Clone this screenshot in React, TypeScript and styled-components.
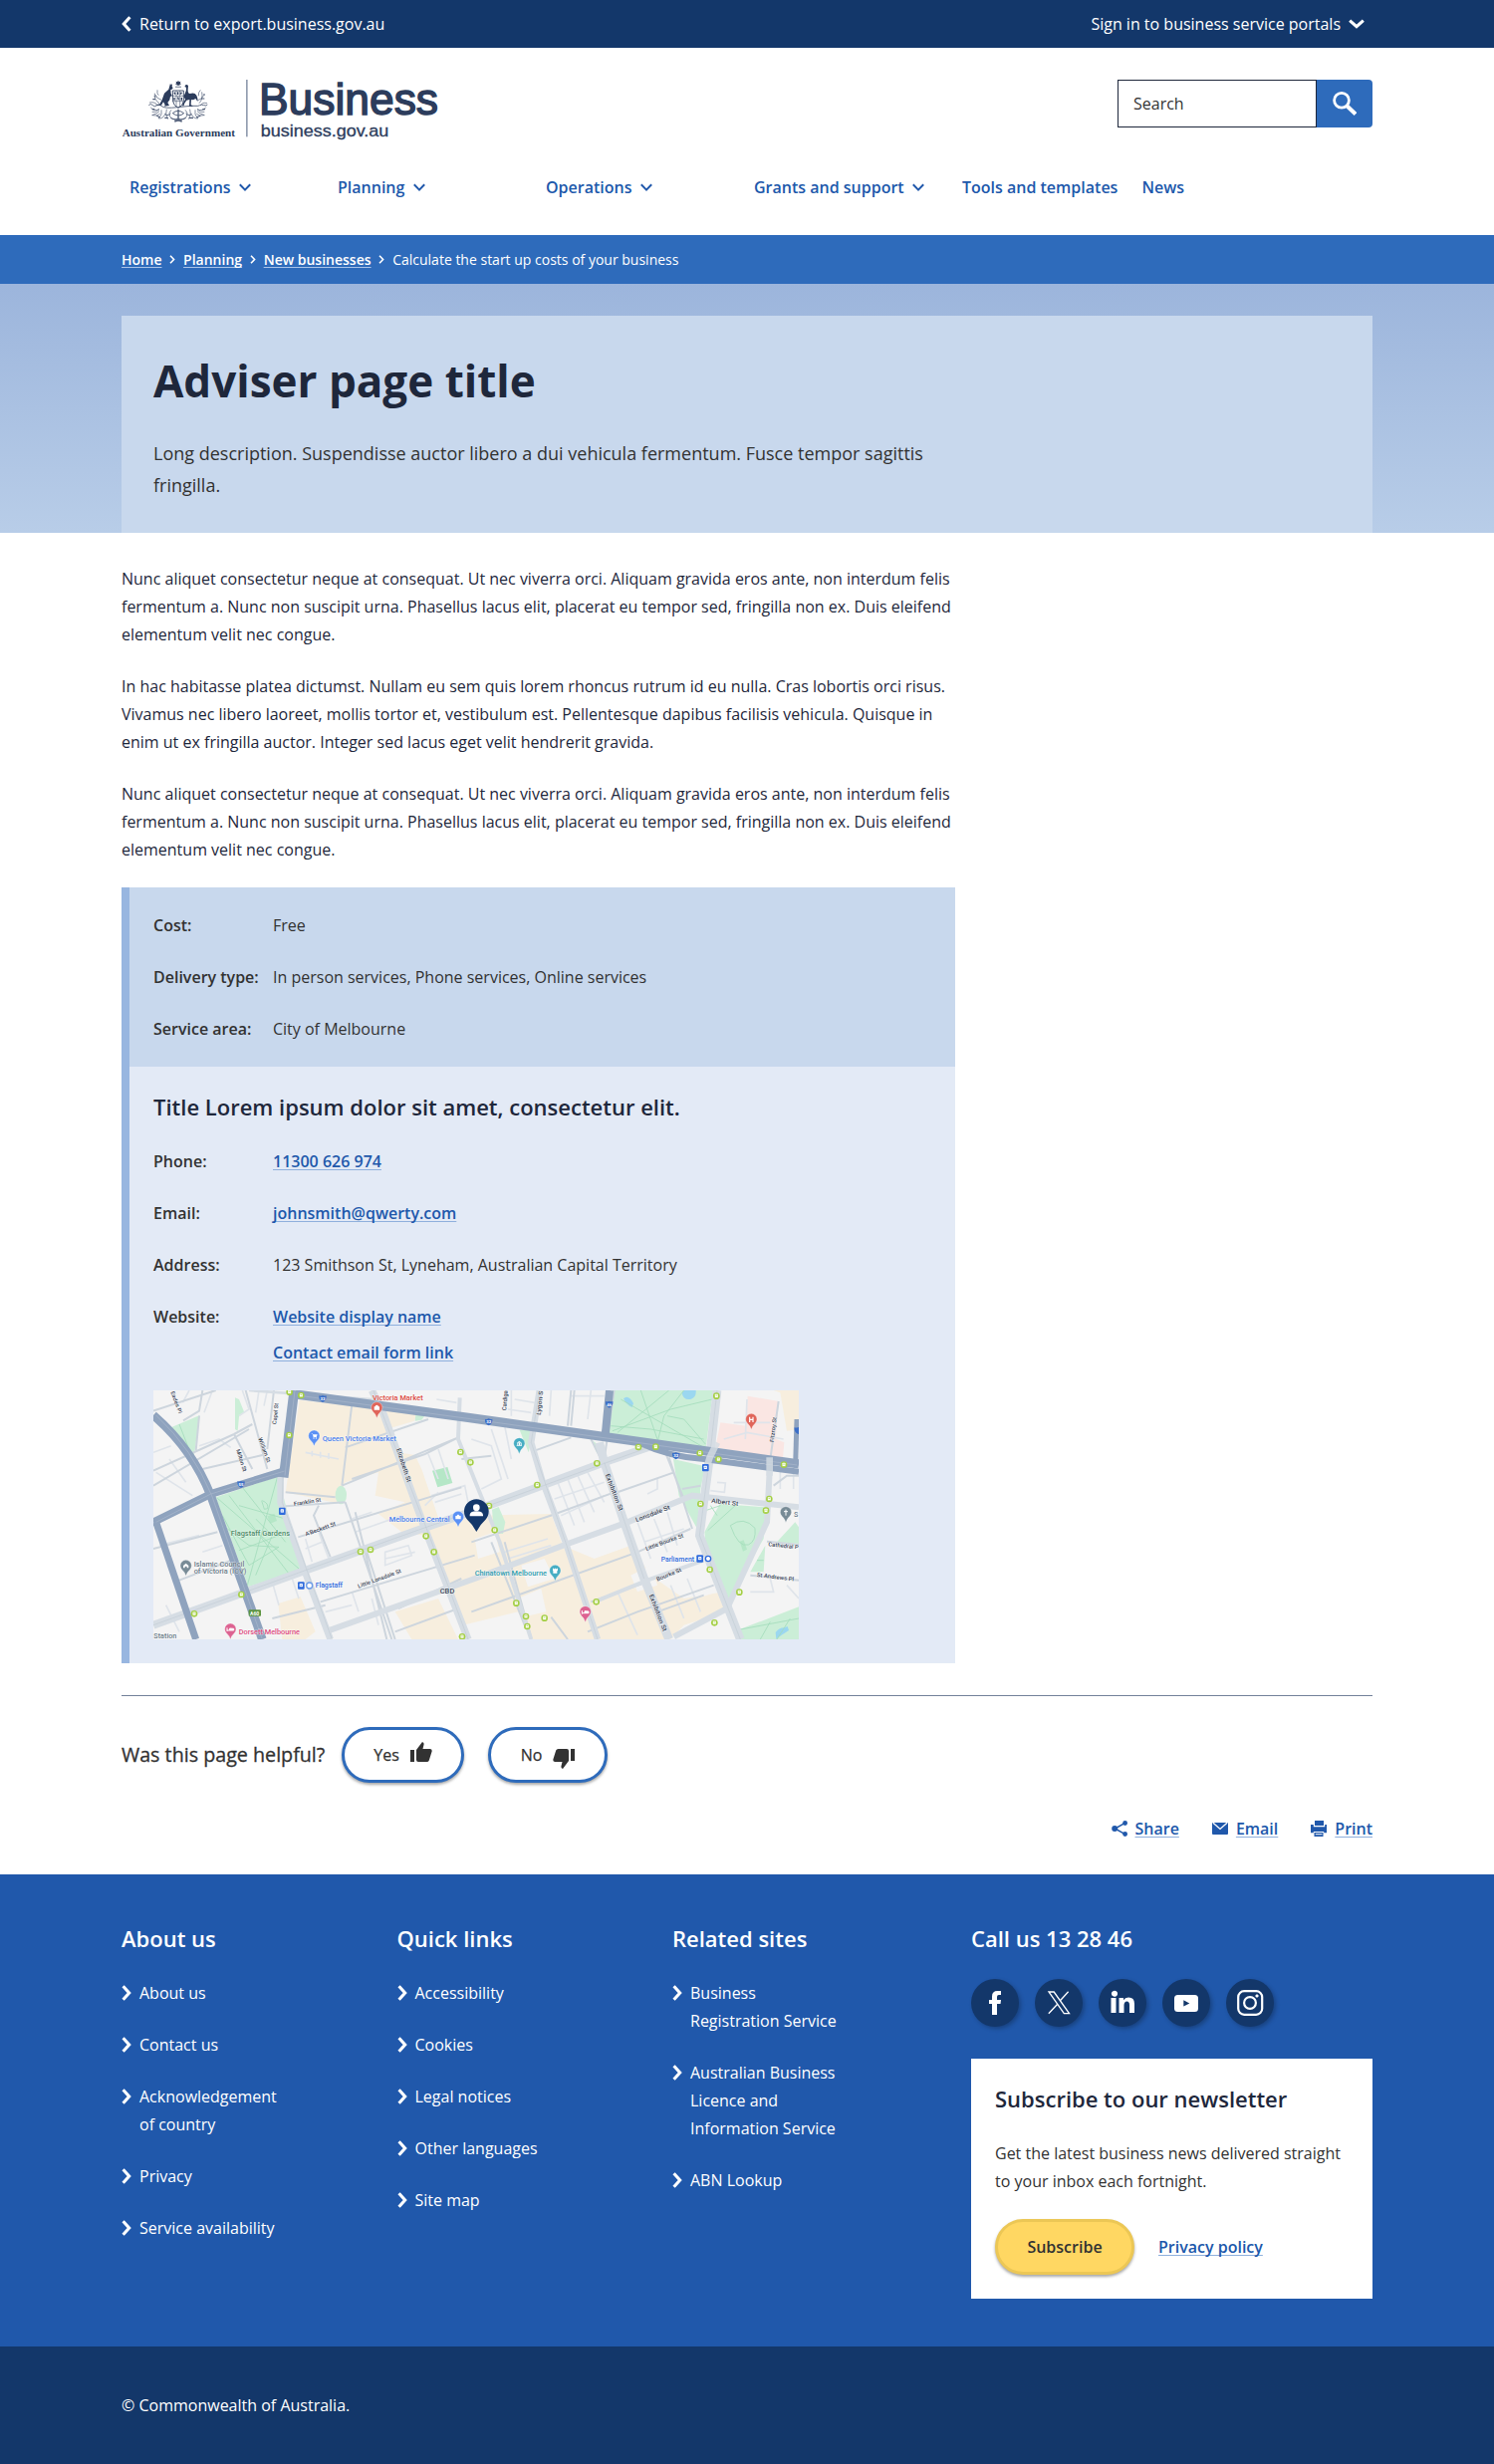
import React from "react";
import styled, { createGlobalStyle } from "styled-components";

const c = {
  navy: "#13376a",
  blue: "#2e6bbb",
  royal: "#2058ab",
  link: "#2058ab",
  ink: "#1e273b",
  text: "#323232",
  pale: "#c8d8ed",
  paler: "#e3eaf6",
  edge: "#98b6e0",
};

const GlobalStyle = createGlobalStyle`
  *, *::before, *::after { box-sizing: border-box; }
  body { margin: 0; background: #fff; color: ${c.text}; font: 400 16px/28px "Open Sans", "Noto Sans", sans-serif; }
  p, h1, h2, ul, dl, dd, dt { margin: 0; padding: 0; font-size: inherit; font-weight: inherit; }
  ul { list-style: none; }
  svg { display: block; flex: none; }
  a { color: inherit; text-decoration: none; }
`;

const Container = styled.div`
  width: 1256px;
  margin: 0 auto;
`;

const TopBar = styled.div`
  height: 48px;
  background: ${c.navy};
  color: #fff;
`;

const TopBarInner = styled(Container)`
  height: 48px;
  display: flex;
  align-items: center;
  justify-content: space-between;
`;

const IconLink = styled.a<{ $gap?: number; $end?: number }>`
  display: flex;
  align-items: center;
  gap: ${(p) => p.$gap ?? 8}px;
  margin-right: ${(p) => p.$end ?? 0}px;
`;

const Header = styled.header`
  height: 188px;
`;

const Masthead = styled(Container)`
  display: flex;
  justify-content: space-between;
  align-items: flex-start;
  padding-top: 32px;
  height: 120px;
`;

const LogoArt = styled.svg`
  overflow: visible;
`;

const SearchForm = styled.div`
  display: flex;
  width: 256px;
  height: 48px;
`;

const SearchField = styled.div`
  flex: 1;
  border: 1.5px solid ${c.ink};
  padding: 0 15px;
  line-height: 46px;
`;

const SearchButton = styled.button`
  width: 56px;
  border: 0;
  padding: 0;
  border-radius: 0 4px 4px 0;
  background: ${c.blue};
  display: flex;
  align-items: center;
  justify-content: center;
`;

const Nav = styled(Container)`
  display: flex;
  height: 40px;
  align-items: center;
`;

const NavItem = styled.a<{ $width?: number }>`
  display: flex;
  align-items: center;
  gap: 7.5px;
  width: ${(p) => (p.$width ? `${p.$width}px` : "auto")};
  padding: 0 8px;
  margin-right: ${(p) => (p.$width ? 0 : 8)}px;
  font-weight: 600;
  color: ${c.link};
  white-space: nowrap;
`;

const CrumbBar = styled.div`
  height: 49px;
  background: ${c.blue};
  color: #fff;
`;

const Crumbs = styled(Container)`
  display: flex;
  align-items: center;
  gap: 7.8px;
  height: 49px;
  font-size: 14px;
`;

const Crumb = styled.a`
  font-weight: 600;
  text-decoration: underline;
  text-decoration-color: #a9c3e8;
  text-decoration-thickness: 1px;
  text-underline-offset: 1.5px;
  text-decoration-skip-ink: none;
`;

const Hero = styled.section`
  height: 250px;
  padding-top: 32px;
  background: linear-gradient(#9cb5dc, #b8cde8);
`;

const HeroPanel = styled(Container)`
  height: 218px;
  padding: 32px 32px 0;
  background: ${c.pale};
`;

const PageTitle = styled.h1`
  font-size: 44px;
  font-weight: 700;
  line-height: 66px;
  color: ${c.ink};
`;

const Lead = styled.p`
  margin-top: 24px;
  width: 800px;
  font-size: 18px;
  line-height: 32px;
`;

const Main = styled(Container)`
  padding-top: 32px;
`;

const Article = styled.div`
  width: 837.33px;
  color: ${c.ink};
`;

const Paragraph = styled.p`
  margin-bottom: 24px;
`;

const Details = styled.section`
  border-left: 8px solid ${c.edge};
  color: ${c.text};
`;

const DetailsBlock = styled.div<{ $tone: string }>`
  padding: 24px;
  background: ${(p) => p.$tone};
`;

const DetailsTitle = styled.h2`
  font-size: 22px;
  font-weight: 600;
  line-height: 33px;
  color: ${c.ink};
  margin-bottom: 24px;
`;

const DetailList = styled.dl`
  display: grid;
  grid-template-columns: 120px 1fr;
  row-gap: 24px;
`;

const Term = styled.dt`
  font-weight: 600;
  white-space: nowrap;
`;

const Value = styled.dd`
  display: flex;
  flex-direction: column;
  align-items: flex-start;
  gap: 8px;
`;

const TextLink = styled.a`
  font-weight: 600;
  color: ${c.link};
  text-decoration: underline;
  text-decoration-color: #8fb0dd;
  text-decoration-thickness: 1px;
  text-underline-offset: 1.5px;
  text-decoration-skip-ink: none;
`;

const MapFrame = styled.div`
  width: 648px;
  height: 250px;
  margin-top: 24px;
  overflow: hidden;
  svg { font-family: Roboto, sans-serif; }
`;

const Rule = styled.hr`
  margin: 32px 0 31px;
  border: 0;
  height: 1px;
  background: #73819a;
`;

const Feedback = styled.div`
  display: flex;
  align-items: center;
  height: 56px;
`;

const Question = styled.p`
  width: 221px;
  font-size: 19.7px;
  font-weight: 500;
  -webkit-text-stroke: 0.3px ${c.text};
`;

const Pill = styled.button<{ $width: number; $solid?: boolean; $end?: number; $drop?: number }>`
  display: flex;
  align-items: center;
  justify-content: center;
  gap: 11px;
  width: ${(p) => p.$width}px;
  height: 56px;
  margin-right: ${(p) => p.$end ?? 24}px;
  padding: 0;
  border: 3px solid ${(p) => (p.$solid ? "#ecc755" : c.blue)};
  border-radius: 28px;
  background: ${(p) => (p.$solid ? "#ffd762" : "#fff")};
  box-shadow: 0 2px 3px rgba(0, 0, 0, 0.35);
  color: ${c.text};
  font: ${(p) => (p.$solid ? 600 : 500)} 16px/28px "Open Sans", sans-serif;
  -webkit-text-stroke: ${(p) => (p.$solid ? 0 : 0.25)}px ${c.text};
  svg { margin-top: ${(p) => p.$drop ?? 0}px; }
`;

const ShareRow = styled.div`
  display: flex;
  justify-content: flex-end;
  gap: 33px;
  margin-top: 32px;
  padding-bottom: 32px;
`;

const Footer = styled.footer`
  height: 474px;
  background: ${c.royal};
  color: #fff;
`;

const FooterInner = styled(Container)`
  display: grid;
  grid-template-columns: 276.5px 276.5px 300px 403px;
  padding-top: 48px;
`;

const FooterHeading = styled.h2`
  font-size: 22px;
  font-weight: 600;
  line-height: 33px;
  margin-bottom: 24px;
`;

const FooterList = styled.ul`
  display: grid;
  gap: 24px;
`;

const FooterItem = styled.li`
  display: flex;
  gap: 8px;
  white-space: pre-line;
  svg { margin-top: 6px; }
`;

const Socials = styled.div`
  display: flex;
  gap: 16px;
`;

const Social = styled.a`
  width: 48px;
  height: 48px;
  border-radius: 50%;
  background: ${c.navy};
  box-shadow: 2px 2px 4px rgba(0, 0, 0, 0.25);
`;

const Newsletter = styled.div`
  margin-top: 32px;
  height: 241px;
  padding: 24px;
  background: #fff;
  color: ${c.text};
`;

const NewsTitle = styled(FooterHeading)`
  color: ${c.ink};
  margin-bottom: 24px;
`;

const NewsActions = styled.div`
  display: flex;
  align-items: center;
  margin-top: 24px;
`;

const Legal = styled.div`
  height: 118px;
  background: ${c.navy};
  color: #fff;
  padding-top: 45px;
`;

const ThickChevron = ({ dir }: { dir: "left" | "right" | "down" }) => {
  const turn = { right: 0, left: 180, down: 90 }[dir];
  const down = dir === "down";
  return (
    <svg width={down ? 16 : 10} height={down ? 10 : 16} viewBox={down ? "-8 -5 16 10" : "-5 -8 10 16"}>
      <path d="M-3.4 -6.8L2.7 0L-3.4 6.8" transform={`rotate(${turn})`} fill="none" stroke="#fff" strokeWidth="3.1" />
    </svg>
  );
};

const NavChevron = () => (
  <svg width="14" height="9" viewBox="0 0 14 9">
    <path d="M1.8 1.2L7 6.6L12.2 1.2" fill="none" stroke={c.link} strokeWidth="2" />
  </svg>
);

const CrumbChevron = () => (
  <svg width="6" height="9" viewBox="0 0 6 9">
    <path d="M1 .8L4.6 4.5L1 8.2" fill="none" stroke="#fff" strokeWidth="1.6" />
  </svg>
);

const logoInk = "#2c3c5c";

const Foliage = () => (
  <g fill="none" stroke={logoInk} strokeWidth="2" opacity=".85">
    <path d="M118 122q6-7 12 0t12 0 14 2 50 4 52-4 14-2 12 0 11-2" strokeWidth="2.6" />
    <path d="M124 128q8 14 26 6q-12 12-22 8M150 140q-8 8-22 12q14 4 24-4M156 136q4 14-8 26q16 0 20-16M172 134q-6 16 4 30M186 136q-10 8-4 20t16 8M290 128q-8 14-26 6q12 12 22 8M264 140q8 8 22 12q-14 4-24-4M258 136q-4 14 8 26q-16 0-20-16M242 134q6 16-4 30M228 136q10 8 4 20t-16 8" />
    <path d="M150 116q-16-10-14-30M156 106q-14-4-18-16M148 92q-6-4-4-16M146 124q-8-14-26-10M270 116q12-12 8-34M264 108q14-4 20-16M268 94q-2-10 6-18M274 122q6-10 20-6" />
    <path d="M190 146q16-14 34 0q-16 14-34 0M196 168q10-12 22 0M184 160q22 12 46 0M168 150q10 6 16-4M246 150q-10 6-16-4" strokeWidth="2.8" />
    <path d="M134 96h6M130 104h8M282 90h6M276 102h10M128 134h8M280 134h8M142 154l10 4M262 158l12-4M166 160h10M240 160h12" strokeWidth="3.4" />
    <path d="M207 134v36M196 172q11-8 22 0" strokeWidth="4" />
  </g>
);

const Logo = () => (
  <LogoArt width="320" height="70" viewBox="36 45 960 210" role="img" aria-label="Australian Government, Business">
    <g fill={logoInk}>
      <path d="M207 47l2.500 4.500 5-1-2 4.500 3.500 3.500-4.800.8-.8 4.700-3.400-3.400-3.400 3.400-.8-4.700-4.800-.8 3.500-3.500-2-4.500 5 1z" />
      <path d="M199 65h4v3h-4zM205 65h4v3h-4zM211 65h4v3h-4z" />
      <path d="M183 56l2 5 4-3-1 7 3 5-3 4-4 1 1 12 4 7-6 2-2 10-6 8 5 9-15 2 2-4-5-9-6 10-20 2 14-4 8-14 7-20 13-12 3-10z" />
      <path d="M227 64q4-7 10-1l-1 11q-1 12 6 13 14-5 20 5 5 10 3 18l-6-8q-8 6-13 3l-1 16 8 4h-13l1-20-9 2-7 11-1 6h-5l2-8 7-12q-7-8-1-17 5-9 4-19l-4-1z" />
    </g>
    <path d="M190 78h33v32q-2 14-16 20-14-6-16-20z" fill="none" stroke={logoInk} strokeWidth="2.600" />
    <path d="M190 94h33M190 110h33M201 78v48M212 78v48" stroke={logoInk} strokeWidth="2" opacity=".8" />
    <path d="M195 83l3 6M206 82v8M217 83l-3 6M195 99v8M206 97l2 9M217 99v8" stroke={logoInk} strokeWidth="4" />
    <Foliage />
    <rect x="411" y="45" width="5" height="172" fill="#929db0" />
    <text x="38" y="215" textLength="340" lengthAdjust="spacingAndGlyphs" fontFamily="Liberation Serif, serif" fontWeight="700" fontSize="33" fill={logoInk}>Australian Government</text>
    <text x="450" y="150" textLength="540" lengthAdjust="spacingAndGlyphs" fontFamily="Liberation Sans, sans-serif" fontSize="133" fill={logoInk} stroke={logoInk} strokeWidth="4.500">Business</text>
    <text x="455" y="215" textLength="386" lengthAdjust="spacingAndGlyphs" fontFamily="Liberation Sans, sans-serif" fontSize="50" fill={logoInk} stroke={logoInk} strokeWidth=".9">business.gov.au</text>
  </LogoArt>
);

type XY = [number, number];

const Stop = ({ at: [x, y] }: { at: XY }) => (
  <g transform={`translate(${x} ${y})`}>
    <circle r="10" fill="#a4cf45" />
    <rect x="-4.500" y="-5.500" width="9" height="10" rx="1.500" fill="#fff" />
    <path d="M-2.500 -1.500h5M-2.500 6h5" stroke="#a4cf45" strokeWidth="2" />
  </g>
);

const Pin = ({ at: [x, y], fill, children }: { at: XY; fill: string; children?: React.ReactNode }) => (
  <g transform={`translate(${x} ${y})`}>
    <path d="M0 30Q-3 19-12 11A17 17 0 1 1 12 11Q3 19 0 30z" fill={fill} stroke="#fff" strokeWidth="1" />
    {children}
  </g>
);

const Label = ({ x, y, t, w, fill = "#3c4758", turn = 0, size = 19 }: { x: number; y: number; t: string; w: number; fill?: string; turn?: number; size?: number }) => (
  <text transform={`translate(${x} ${y}) rotate(${turn})`} textLength={w} lengthAdjust="spacingAndGlyphs" fontSize={size} fontWeight="500" fill={fill} stroke="#fff" strokeWidth="2.500" strokeOpacity=".6" paintOrder="stroke">{t}</text>
);

const Shield = ({ at: [x, y], n }: { at: XY; n: string }) => (
  <g transform={`translate(${x} ${y})`}>
    <path d="M-11-9q5 2 11-1 6 3 11 1 2 14-11 20-13-6-11-20z" fill="#3c6fc8" />
    <text textAnchor="middle" y="5" fontSize="13" fontWeight="700" fill="#fff">{n}</text>
  </g>
);

const Station = ({ at: [x, y] }: { at: XY }) => (
  <g transform={`translate(${x} ${y})`}>
    <rect x="-10" y="-11" width="20" height="22" rx="3" fill="#2f6bdc" />
    <rect x="-5" y="-6" width="10" height="10" rx="2" fill="#fff" />
    <path d="M-3-1h6M-4 7l2-3M4 7l-2-3" stroke="#2f6bdc" strokeWidth="2" />
  </g>
);

const stops: XY[] = [
  [452, 38], [487, 48], [451, 168], [967, 219], [997, 250], [666, 519], [696, 513], [863, 472], [887, 520], [307, 648], [165, 706], [972, 775],
  [1053, 381], [1070, 454], [1198, 318], [1378, 253], [1503, 204], [1555, 203], [1688, 222], [1744, 241], [1738, 50], [1941, 257], [1690, 375],
  [1897, 360], [1887, 395], [1718, 573], [1807, 641], [1732, 733], [1376, 670], [1220, 719], [1135, 674], [1164, 714], [1168, 744],
];

const CityMap = () => (
  <svg width="648" height="250" viewBox="42 33 1944 750">
    <rect x="42" y="33" width="1944" height="750" fill="#f4f4f4" />

    <g fill="#f7eede">
      <path d="M482 62L640 80L835 106L828 125L745 150L770 218L830 228L850 270L905 430L1020 410L1240 405L1275 500L1370 540L1480 500L1540 590L1640 660L1760 640L1765 700L1640 740L1600 783L1180 783L1140 700L975 740L930 610L860 470L790 460L720 405L800 370L710 350L720 280L620 310L592 372L440 340Z" />
      <path d="M418 675L485 655L530 760L500 783L430 783ZM770 700L900 660L960 783L820 783ZM1910 33H1986V150L1950 155L1930 40Z" />
    </g>
    <g fill="#f4f4f4">
      <path d="M1010 480L1070 460L1085 520L1020 540ZM1150 560L1220 540L1250 600L1170 625ZM1140 660L1210 630L1225 700L1160 715ZM1480 590L1540 560L1560 620L1500 640ZM1650 590L1710 560L1740 640L1680 660Z" />
    </g>
    <path d="M1832 50L1925 66L1917 180L1942 190L1938 240L1735 205L1750 130L1828 140Z" fill="#fae6e3" />

    <g fill="#cbeed7">
      <path d="M95 145L182 108L163 240ZM230 355L418 292L490 570L328 625ZM288 55L300 60L316 100L300 112L296 155L288 150ZM832 105L868 98L850 122L830 125Z" />
      <path d="M1425 33H1728L1706 208L1412 162ZM1145 152H1188L1172 220ZM1608 240L1704 262L1690 330L1680 450L1625 350ZM1748 375L1885 385L1880 480L1772 668L1712 560L1702 460Z" />
      <path d="M1790 760L1986 685V783H1800ZM1062 392L1082 384L1102 430L1095 465L1068 462ZM1360 180L1385 200L1378 222ZM1920 490L1975 430L1986 445V495ZM1840 580L1885 500L1880 580ZM1760 640L1780 630L1775 680Z" />
      <ellipse cx="607" cy="348" rx="17" ry="28" />
    </g>
    <g fill="#b5e7c7"><path d="M882 275L928 264L943 312L898 325ZM385 412L406 404L414 426L394 434ZM1808 488L1820 484L1830 512L1818 518Z" /></g>
    <g fill="#9bd7f0"><path d="M1458 58q14-14 30 14l-4 12q-18-8-26-26zM1634 42q4-12 14-9h28q2 20-14 26-22 6-28-17zM1916 762q10-14 26-14l10-4 4 12-22 14-16 12z" /></g>

    <g fill="none" stroke="#a3dcbc" strokeWidth="2.500">
      <path d="M235 358L480 570M415 296L325 620M270 350L450 585M250 410L330 560L420 505L330 500L265 450M310 325L440 490M300 380L440 420L470 520M300 515L420 470M350 590L400 470L350 420M120 135L160 238M370 365q20 8 16 24l-10 2-8-26" />
      <path d="M1425 155L1600 90L1725 60M1450 60L1700 205M1510 33L1565 195M1640 33L1580 110L1560 190M1595 33L1440 160M1420 140L1540 150L1700 180M1590 110L1640 120L1705 195M1690 400L1750 380M1712 455L1800 375M1720 380L1740 410M1800 755L1986 720M1870 783L1900 730M1920 783L1960 720M1860 545H1880M1780 440q40-30 74 8q4 40-20 50q-30 10-54-58" />
    </g>

    <g fill="none" stroke="#dfe4ea" strokeWidth="5">
      <path d="M42 220L95 200M50 280L160 350M90 240L140 310M85 560L120 640M60 500L180 470M180 200L240 180L275 205M310 33L330 90L300 110M360 33L350 100M385 33L375 80M220 33L195 100M150 33L130 70M500 480L520 550M540 460L570 540M500 510L550 490M640 420L700 400M650 460L790 410M900 340L860 380M880 350L980 320L990 370M890 370L970 345M740 520L810 500L820 530L740 560ZM740 540L830 520M500 220L600 240M520 215V232M545 218V236M570 222V240M870 225L900 300M900 210L930 300M850 95H870M895 60L955 70M640 640L660 700M700 660L720 740M560 700L640 680M400 610L420 680M460 600L480 660M80 680L120 760M190 520L250 500" />
      <path d="M1000 180L1060 200L1090 300L1030 330M1060 150L1110 300M1100 140L1120 240M1130 60L1190 70M1110 90L1180 100M1120 33V110M1240 33L1235 110M1360 33L1350 120M1300 50H1400M1260 310L1310 440M1290 300L1340 430M1320 290L1370 400M1350 280L1400 370M1250 360L1400 310M1270 410L1400 350M1500 430L1540 540M1550 420L1590 520M1590 400L1620 500M1520 490L1640 450M1560 300V330L1530 345M1740 310L1765 312L1762 340L1720 335M1790 130H1900M1830 60L1825 180M1760 180L1830 160L1940 180M1930 270V330M1970 270V330M1840 640H1910L1900 600M1950 620L1986 660M1440 640L1500 770M1600 620L1640 720M1650 600L1690 700M1100 520L1230 480M1110 540L1240 500" />
    </g>

    <g fill="none" stroke="#cdd5dd" strokeWidth="6">
      <path d="M42 95L230 33M42 275L285 165L340 135M42 320L330 150M180 110L170 215M190 270L370 228M42 510L235 460M120 605L290 540M132 124L180 95L190 33M440 382L620 370M620 370L760 783M440 340L590 355M285 165L340 270M385 210L405 33M478 475L840 365L970 325M540 380L525 410L575 535M545 670L1010 530M400 720L560 680M640 75L610 320M610 320L960 175L860 225L640 300M620 205L870 120M320 33L385 270M650 400L745 783M685 520L770 783M780 690L970 600M770 760L960 690" />
      <path d="M1000 490L1245 408L1430 340M1000 700L1500 520L1660 450M1190 215L1300 175M1425 345L1610 280M1430 33L1400 240M1595 235L1665 450M1580 210L1640 360M1635 330L1690 320M1300 33L1290 140M1310 33L1300 140M1360 180L1385 230M1060 490L1160 740M1100 490L1180 780M1240 716L1290 783M1350 760L1500 700L1730 620M1060 230L970 240M1360 670L1530 610M1840 590L1986 605M1890 488L1986 498M1910 320L1950 290L1986 290M1925 66L1900 240M1560 700L1700 650" />
    </g>

    <g fill="none" stroke="#d6dde4">
      <path d="M42 740L500 575L850 450L1030 388L1400 250L1560 195" strokeWidth="24" />
      <path d="M560 760L1010 600L1290 495L1470 430L1665 350L1986 385" strokeWidth="18" />
      <path d="M425 290L425 370L495 570L575 783" strokeWidth="20" />
      <path d="M700 33L730 90L860 450L990 783" strokeWidth="22" />
      <path d="M965 55L960 180L1085 490L1180 783" strokeWidth="12" />
      <path d="M1205 33L1180 190L1215 310L1285 495L1380 783" strokeWidth="19" />
      <path d="M1385 190L1400 250L1460 430L1520 600L1595 783" strokeWidth="26" />
      <path d="M1740 33L1718 230L1687 470L1810 783" strokeWidth="26" />
      <path d="M1900 240L1890 430L1770 690L1610 775" strokeWidth="18" />
      <path d="M1370 670L1530 605L1700 545" strokeWidth="12" />
      <path d="M330 33L700 60" strokeWidth="8" />
    </g>
    <g fill="none" stroke="#b9c4cf" strokeWidth="1.300">
      <path d="M42 740L500 575L850 450L1030 388L1560 195M432 290L430 370L580 783M705 33L865 450L990 783M1400 250L1520 600M1740 33L1718 230L1687 470L1810 783M1205 33L1180 190L1285 495L1380 783" />
    </g>

    <g fill="none" stroke="#8fa3be" strokeLinejoin="round">
      <path d="M42 108Q160 210 215 350L370 783" strokeWidth="26" />
      <path d="M42 430L215 345L437 276" strokeWidth="23" />
      <path d="M50 430L170 783" strokeWidth="21" />
      <path d="M466 33L434 295" strokeWidth="29" />
      <path d="M470 45L990 115L1986 255" strokeWidth="28" />
      <path d="M1510 193Q1600 235 1700 240L1986 278" strokeWidth="18" />
      <path d="M1416 33L1402 180" strokeWidth="24" />
      <path d="M1980 120L1976 260" strokeWidth="15" />
    </g>
    <path d="M50 108Q160 210 218 350L370 783M50 430L215 345L437 276M468 33L438 290M475 48L990 118L1980 258" fill="none" stroke="#b2bfd1" strokeWidth="1.500" />
    <path d="M1740 190L1718 235L1704 280M1898 235V290" fill="none" stroke="#d6dde4" strokeWidth="20" opacity=".8" />

    {stops.map((s, i) => <Stop key={i} at={s} />)}
    <Shield at={[552, 58]} n="32" />
    <Shield at={[306, 316]} n="55" />
    <Shield at={[1052, 128]} n="32" />
    <Shield at={[1415, 75]} n="46" />
    <Shield at={[1616, 230]} n="32" />
    <Shield at={[1984, 154]} n="" />
    <rect x="329" y="694" width="37" height="19" rx="3" fill="#5c9440" />
    <text x="347" y="710" textAnchor="middle" fontSize="15" fontWeight="700" fill="#fff">A60</text>
    <Station at={[430, 397]} />
    <Station at={[1705, 266]} />
    <Station at={[487, 621]} />
    <circle cx="512" cy="621" r="9" fill="#fff" stroke="#6b9be8" strokeWidth="4" />
    <Station at={[1688, 540]} />
    <circle cx="1713" cy="540" r="8" fill="#fff" stroke="#2f6bdc" strokeWidth="4" />

    <Label x={94} y={38} t="Eades Pl" w={70} turn={70} size={17} />
    <Label x={412} y={136} t="Capel St" w={64} turn={-84} size={17} />
    <Label x={358} y={178} t="William St" w={78} turn={70} size={17} />
    <Label x={291} y={212} t="Milton St" w={70} turn={72} size={17} />
    <Label x={774} y={210} t="Elizabeth St" w={106} turn={72} />
    <Label x={466} y={381} t="Franklin St" w={82} turn={-9} size={17} />
    <Label x={502} y={472} t="A'Beckett St" w={96} turn={-20} size={17} />
    <Label x={660} y={629} t="Little Lonsdale St" w={138} turn={-20} size={17} />
    <Label x={905} y={644} t="CBD" w={44} size={19} />
    <Label x={1105} y={94} t="Cardiga" w={60} turn={-86} size={18} />
    <Label x={1208} y={108} t="Lygon S" w={73} turn={-84} size={18} />
    <Label x={1403} y={287} t="Exhibition St" w={118} turn={69} />
    <Label x={1535} y={650} t="Exhibition St" w={118} turn={69} />
    <Label x={1497} y={430} t="Lonsdale St" w={110} turn={-21} />
    <Label x={1527} y={516} t="Little Bourke St" w={120} turn={-20} size={17} />
    <Label x={1560} y={608} t="Bourke St" w={80} turn={-22} size={17} />
    <Label x={1722} y={371} t="Albert St" w={82} turn={7} />
    <Label x={1910} y={190} t="Fitzroy St" w={76} turn={-83} size={17} />
    <Label x={1894} y={502} t="Cathedral P" w={91} turn={6} size={17} />
    <Label x={1859} y={594} t="St Andrews Pl" w={112} turn={7} size={17} />
    <Label x={275} y={472} t="Flagstaff Gardens" w={178} fill="#4c8a66" size={21} />
    <Label x={164} y={563} t="Islamic Council" w={152} fill="#6b7c89" size={20} />
    <Label x={164} y={586} t="of Victoria (ICV)" w={158} fill="#6b7c89" size={20} />
    <Label x={43} y={781} t="Station" w={69} fill="#6b7c89" size={19} />
    <Label x={551} y={185} t="Queen Victoria Market" w={222} fill="#4a80ec" size={21} />
    <Label x={702} y={63} t="Victoria Market" w={152} fill="#dc4a42" size={21} />
    <Label x={752} y={430} t="Melbourne Central" w={183} fill="#4a80ec" size={21} />
    <Label x={530} y={627} t="Flagstaff" w={82} fill="#2f6bdc" size={21} />
    <Label x={299} y={768} t="Dorsett Melbourne" w={184} fill="#dd4b80" size={21} />
    <Label x={1010} y={592} t="Chinatown Melbourne" w={217} fill="#2f9cae" size={21} />
    <Label x={1571} y={548} t="Parliament" w={100} fill="#2f6bdc" size={21} />
    <Label x={1971} y={415} t="S" w={13} fill="#6b7c89" size={21} />

    <Pin at={[526, 171]} fill="#5b91f5"><path d="M-9-8h4l3 11h9l3-8H-4" fill="#fff" /><circle cx="-1" cy="6" r="2" fill="#fff" /><circle cx="6" cy="6" r="2" fill="#fff" /></Pin>
    <Pin at={[715, 86]} fill="#e0655a"><path d="M-8-4H8V6H-8zM-5-4q0-5 5-5t5 5" fill="#fff" /></Pin>
    <Pin at={[960, 415]} fill="#5b91f5"><path d="M-8-4H8V6H-8zM-4-4q0-4 4-4t4 4" fill="#fff" /></Pin>
    <Pin at={[140, 562]} fill="#788b96"><path d="M-8 6V-1L0-8 8-1V6H3V1H-3V6z" fill="#fff" /></Pin>
    <Pin at={[274, 753]} fill="#dd6391"><path d="M-10-5V6M-10 3H10V-2L-2-3V3" stroke="#fff" strokeWidth="3" fill="#fff" /></Pin>
    <Pin at={[1144, 194]} fill="#46adc3"><path d="M-8 6V4H8V6zM-8-3L0-8 8-3zM-6-2H-3V4H-6zM-1-2H2V4H-1zM4-2H7V4H4z" fill="#fff" /></Pin>
    <Pin at={[1252, 577]} fill="#46adc3"><path d="M-7-8h3v2h3v-2h3v2h3v-2h3v6L6 0v7H-6V0l-1-2z" fill="#fff" /></Pin>
    <Pin at={[1343, 701]} fill="#dd6391"><path d="M-10-5V6M-10 3H10V-2L-2-3V3" stroke="#fff" strokeWidth="3" fill="#fff" /></Pin>
    <Pin at={[1843, 121]} fill="#e0655a"><path d="M-5-8V8M5-8V8M-5 0H5" stroke="#fff" strokeWidth="3.500" /></Pin>
    <Pin at={[1947, 401]} fill="#788b96"><path d="M0-9V9M-6-3H6" stroke="#fff" strokeWidth="3" /></Pin>

    <path d="M1015 459Q1004 437 988 423A37 37 0 1 1 1042 423Q1026 437 1015 459z" fill={c.navy} />
    <circle cx="1015" cy="386" r="10" fill="#fff" />
    <path d="M995 412V407Q998 397 1015 397T1035 407V412z" fill="#fff" />
  </svg>
);

const Thumb = ({ down }: { down?: boolean }) => (
  <svg width="22" height="22" viewBox="0 0 22 22">
    <path
      transform={down ? "rotate(180 11 11)" : undefined}
      d="M0 9h4v12H0zM6 9l6-8q2 .6 1.600 2.500L12.500 8H20q2 .2 1.700 2.300L18.800 19.400Q18.300 21 16.500 21H8q-2 0-2-2z"
      fill={c.text}
    />
  </svg>
);

const ShareIcon = () => (
  <svg width="16" height="16" viewBox="0 0 16 16" fill={c.link}>
    <path d="M13.500 2.400L3.500 8l10 5.600" fill="none" stroke={c.link} strokeWidth="1.500" />
    <circle cx="3.200" cy="8" r="3" /><circle cx="13.600" cy="2.500" r="2.400" /><circle cx="13.600" cy="13.500" r="2.400" />
  </svg>
);

const MailIcon = () => (
  <svg width="16" height="12" viewBox="0 0 16 12" fill={c.link}>
    <rect width="16" height="12" rx="1" />
    <path d="M1 .2L8 6.500L15 .2" fill="none" stroke="#fff" strokeWidth="1.300" />
  </svg>
);

const PrintIcon = () => (
  <svg width="16" height="16" viewBox="0 0 16 16" fill={c.link}>
    <path d="M4 0h9v5H4zM0 4h2.800v2.200h11.400V4H16v8.200h-2.800V11H2.800v1.200H0zM3.500 12h9v4h-9z" />
    <path d="M4.800 13.200h6.600v1H4.800z" fill="#fff" />
  </svg>
);

const Facebook = () => (
  <path d="M21 36V25h-3v-4h3v-3.500Q21 12 26.500 12H30v4h-2.200Q26 16 26 18v3h4l-.5 4H26v11z" fill="#fff" />
);
const XMark = () => (
  <g fill="none" stroke="#fff" strokeWidth="1.300">
    <path d="M14 13h5.200L34.500 34.600h-5.200zM13.800 34.800L22.700 25.300M33.600 12.800L25.200 22" />
  </g>
);
const LinkedIn = () => (
  <path d="M12.500 19h5v15h-5zM15 12a3 3 0 1 1 0 5.600A2.900 2.900 0 0 1 15 12zM20.500 19H25v2.200q1.500-2.600 5-2.600 6 0 6 6.400v9h-5v-8q0-3.500-2.600-3.500T25.500 26v8h-5z" fill="#fff" />
);
const YouTube = () => (
  <g><rect x="12" y="16" width="24" height="17" rx="3.500" fill="#fff" /><path d="M21.300 21.300v6.200l6-3.100z" fill={c.navy} /></g>
);
const Instagram = () => (
  <g fill="none" stroke="#fff" strokeWidth="2.200">
    <rect x="12.200" y="12.200" width="24" height="23.600" rx="6" /><circle cx="24" cy="24" r="5.900" /><circle cx="31" cy="17" r="1.300" fill="#fff" strokeWidth=".6" />
  </g>
);

const navItems = ["Registrations", "Planning", "Operations", "Grants and support"];
const lorem =
  "Nunc aliquet consectetur neque at consequat. Ut nec viverra orci. Aliquam gravida eros ante, non interdum felis fermentum a. Nunc non suscipit urna. Phasellus lacus elit, placerat eu tempor sed, fringilla non ex. Duis eleifend elementum velit nec congue.";
const habitasse =
  "In hac habitasse platea dictumst. Nullam eu sem quis lorem rhoncus rutrum id eu nulla. Cras lobortis orci risus. Vivamus nec libero laoreet, mollis tortor et, vestibulum est. Pellentesque dapibus facilisis vehicula. Quisque in enim ut ex fringilla auctor. Integer sed lacus eget velit hendrerit gravida.";

const footerColumns = [
  { title: "About us", items: ["About us", "Contact us", "Acknowledgement\nof country", "Privacy", "Service availability"] },
  { title: "Quick links", items: ["Accessibility", "Cookies", "Legal notices", "Other languages", "Site map"] },
  { title: "Related sites", items: ["Business\nRegistration Service", "Australian Business\nLicence and\nInformation Service", "ABN Lookup"] },
];

const socials = [Facebook, XMark, LinkedIn, YouTube, Instagram];

export default function App() {
  return (
    <>
      <GlobalStyle />
      <TopBar>
        <TopBarInner>
          <IconLink><ThickChevron dir="left" />Return to export.business.gov.au</IconLink>
          <IconLink $end={8}>Sign in to business service portals<ThickChevron dir="down" /></IconLink>
        </TopBarInner>
      </TopBar>

      <Header>
        <Masthead>
          <Logo />
          <SearchForm>
            <SearchField>Search</SearchField>
            <SearchButton aria-label="Search">
              <svg width="24" height="24" viewBox="0 0 24 24" fill="none" stroke="#fff">
                <circle cx="9" cy="8.800" r="7.400" strokeWidth="2.800" />
                <path d="M14 14L23 22.500" strokeWidth="4" />
              </svg>
            </SearchButton>
          </SearchForm>
        </Masthead>
        <Nav as="nav">
          {navItems.map((n) => <NavItem key={n} $width={209}>{n}<NavChevron /></NavItem>)}
          <NavItem>Tools and templates</NavItem>
          <NavItem>News</NavItem>
        </Nav>
      </Header>

      <CrumbBar>
        <Crumbs>
          <Crumb>Home</Crumb><CrumbChevron />
          <Crumb>Planning</Crumb><CrumbChevron />
          <Crumb>New businesses</Crumb><CrumbChevron />
          <span>Calculate the start up costs of your business</span>
        </Crumbs>
      </CrumbBar>

      <Hero>
        <HeroPanel>
          <PageTitle>Adviser page title</PageTitle>
          <Lead>Long description. Suspendisse auctor libero a dui vehicula fermentum. Fusce tempor sagittis fringilla.</Lead>
        </HeroPanel>
      </Hero>

      <Main as="main">
        <Article>
          <Paragraph>{lorem}</Paragraph>
          <Paragraph>{habitasse}</Paragraph>
          <Paragraph>{lorem}</Paragraph>
          <Details>
            <DetailsBlock $tone={c.pale}>
              <DetailList>
                <Term>Cost:</Term><Value>Free</Value>
                <Term>Delivery type:</Term><Value>In person services, Phone services, Online services</Value>
                <Term>Service area:</Term><Value>City of Melbourne</Value>
              </DetailList>
            </DetailsBlock>
            <DetailsBlock $tone={c.paler}>
              <DetailsTitle>Title Lorem ipsum dolor sit amet, consectetur elit.</DetailsTitle>
              <DetailList>
                <Term>Phone:</Term><Value><TextLink>11300 626 974</TextLink></Value>
                <Term>Email:</Term><Value><TextLink>johnsmith@qwerty.com</TextLink></Value>
                <Term>Address:</Term><Value>123 Smithson St, Lyneham, Australian Capital Territory</Value>
                <Term>Website:</Term>
                <Value><TextLink>Website display name</TextLink><TextLink>Contact email form link</TextLink></Value>
              </DetailList>
              <MapFrame><CityMap /></MapFrame>
            </DetailsBlock>
          </Details>
        </Article>
        <Rule />
        <Feedback>
          <Question>Was this page helpful?</Question>
          <Pill $width={123} $drop={-7}>Yes<Thumb /></Pill>
          <Pill $width={120} $drop={7}>No<Thumb down /></Pill>
        </Feedback>
        <ShareRow>
          <IconLink><ShareIcon /><TextLink>Share</TextLink></IconLink>
          <IconLink><MailIcon /><TextLink>Email</TextLink></IconLink>
          <IconLink><PrintIcon /><TextLink>Print</TextLink></IconLink>
        </ShareRow>
      </Main>

      <Footer>
        <FooterInner>
          {footerColumns.map((col) => (
            <div key={col.title}>
              <FooterHeading>{col.title}</FooterHeading>
              <FooterList>
                {col.items.map((i) => <FooterItem key={i}><ThickChevron dir="right" />{i}</FooterItem>)}
              </FooterList>
            </div>
          ))}
          <div>
            <FooterHeading>Call us 13 28 46</FooterHeading>
            <Socials>
              {socials.map((Glyph, i) => (
                <Social key={i}><svg width="48" height="48" viewBox="0 0 48 48"><Glyph /></svg></Social>
              ))}
            </Socials>
            <Newsletter>
              <NewsTitle>Subscribe to our newsletter</NewsTitle>
              <p>Get the latest business news delivered straight to your inbox each fortnight.</p>
              <NewsActions>
                <Pill $width={140} $solid>Subscribe</Pill>
                <TextLink>Privacy policy</TextLink>
              </NewsActions>
            </Newsletter>
          </div>
        </FooterInner>
      </Footer>
      <Legal><Container>© Commonwealth of Australia.</Container></Legal>
    </>
  );
}
